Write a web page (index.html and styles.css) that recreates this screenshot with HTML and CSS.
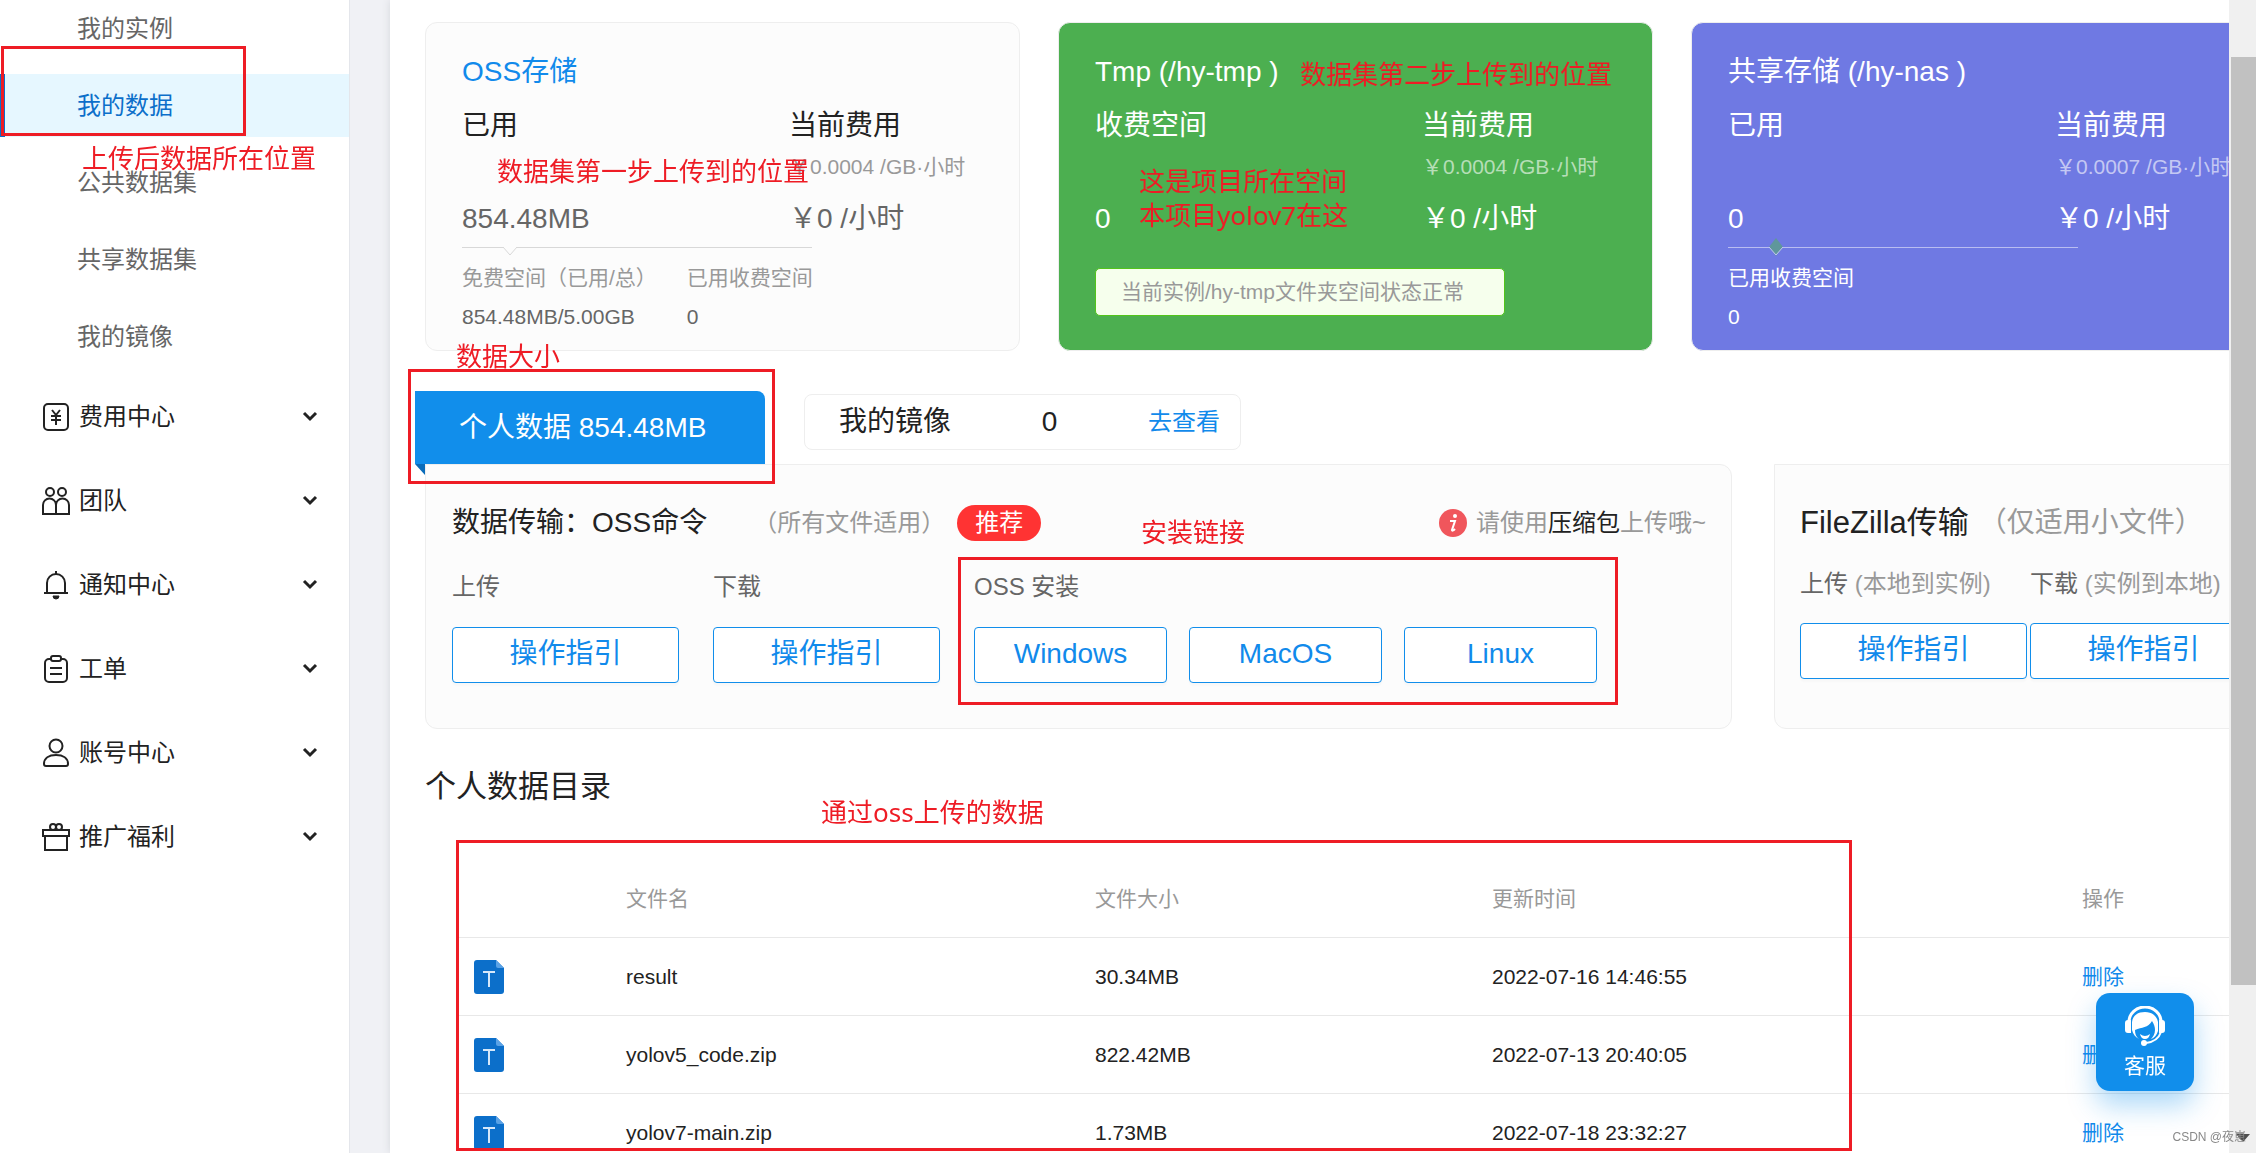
FILE: index.html
```html
<!DOCTYPE html>
<html lang="zh-CN">
<head>
<meta charset="utf-8">
<title>我的数据</title>
<link rel="stylesheet" href="styles.css">
</head>
<body>
<svg class="defs" aria-hidden="true">
  <symbol id="chevron" viewBox="0 0 16 12"><path d="M2 3l6 6 6-6" fill="none" stroke="currentColor" stroke-width="3"/></symbol>
  <symbol id="file" viewBox="0 0 30 34">
    <path d="M3 0h19l8 8v23a3 3 0 0 1-3 3H3a3 3 0 0 1-3-3V3a3 3 0 0 1 3-3z" fill="#0c6fca"/>
    <path d="M22 0l8 8h-6a2 2 0 0 1-2-2z" fill="#5aa2e6"/>
    <path d="M9 12h12M15 12v15" stroke="#d6e8fa" stroke-width="2" fill="none"/>
  </symbol>
</svg>
<div class="app">
  <nav class="sidebar">
    <ul class="submenu">
      <li><a class="subitem" href="#">我的实例</a></li>
      <li><a class="subitem subitem--active" href="#">我的数据</a></li>
      <li><a class="subitem" href="#">公共数据集</a></li>
      <li><a class="subitem" href="#">共享数据集</a></li>
      <li><a class="subitem" href="#">我的镜像</a></li>
    </ul>
    <ul class="menu">
      <li><button class="item" type="button">
        <svg class="item-icon" viewBox="0 0 28 28"><rect x="2" y="1" width="24" height="26" rx="4"/><path d="M10 7l4 5 4-5M9 13h10M9 17h10M14 12v10"/></svg>
        <span>费用中心</span><svg class="chevron"><use href="#chevron"/></svg></button></li>
      <li><button class="item" type="button">
        <svg class="item-icon" viewBox="0 0 28 28"><circle cx="8" cy="5" r="4"/><circle cx="20" cy="5" r="4"/><path d="M1 27v-9a6.500 6.500 0 0 1 13 0v9zM14 27v-9a6.500 6.500 0 0 1 13 0v9z"/></svg>
        <span>团队</span><svg class="chevron"><use href="#chevron"/></svg></button></li>
      <li><button class="item" type="button">
        <svg class="item-icon" viewBox="0 0 28 28"><path d="M14 0v3M2 22h24M5 22V12a9 9 0 0 1 18 0v10"/><path d="M11 25h6a3 3 0 0 1-6 0z" fill="currentColor" stroke-width="1"/></svg>
        <span>通知中心</span><svg class="chevron"><use href="#chevron"/></svg></button></li>
      <li><button class="item" type="button">
        <svg class="item-icon" viewBox="0 0 28 28"><path d="M9 4H7a4 4 0 0 0-4 4v15a4 4 0 0 0 4 4h14a4 4 0 0 0 4-4V8a4 4 0 0 0-4-4h-2"/><rect x="9" y="1" width="10" height="5" rx="2"/><path d="M8 13h12M8 19h12"/></svg>
        <span>工单</span><svg class="chevron"><use href="#chevron"/></svg></button></li>
      <li><button class="item" type="button">
        <svg class="item-icon" viewBox="0 0 28 28"><circle cx="14" cy="7" r="6.500"/><path d="M2 25c0-6 5-9 12-9s12 3 12 9c0 1-1 2-2 2H4c-1 0-2-1-2-2z"/></svg>
        <span>账号中心</span><svg class="chevron"><use href="#chevron"/></svg></button></li>
      <li><button class="item" type="button">
        <svg class="item-icon" viewBox="0 0 28 28"><path d="M1 7h26v6H1zM3 13v14h22V13"/><circle cx="11" cy="4" r="3"/><circle cx="17" cy="4" r="3"/></svg>
        <span>推广福利</span><svg class="chevron"><use href="#chevron"/></svg></button></li>
    </ul>
  </nav>

  <main class="main">
    <section class="cards">
      <article class="card">
        <h2 class="card-title card-title--link">OSS存储</h2>
        <div class="card-grid">
          <div>已用</div><div>当前费用</div>
          <div></div><div class="rate">&#xFFE5;0.0004 /GB·小时</div>
          <div class="amount">854.48MB</div><div class="amount">&#xFFE5;0 /小时</div>
        </div>
        <div class="details">
          <svg class="notch" viewBox="0 0 14 9"><path d="M0 0l7 8 7-8z" fill="#fcfcfc"/><path d="M0 0l7 8 7-8" fill="none" stroke="#d8d8d8"/></svg>
          <dl><dt>免费空间&#xFF08;已用/总&#xFF09;</dt><dd>854.48MB/5.00GB</dd></dl>
          <dl><dt>已用收费空间</dt><dd>0</dd></dl>
        </div>
      </article>
      <article class="card card--green">
        <h2 class="card-title">Tmp (/hy-tmp )</h2>
        <div class="card-grid">
          <div>收费空间</div><div>当前费用</div>
          <div></div><div class="rate">&#xFFE5;0.0004 /GB·小时</div>
          <div class="amount">0</div><div class="amount">&#xFFE5;0 /小时</div>
        </div>
        <p class="alert">当前实例/hy-tmp文件夹空间状态正常</p>
      </article>
      <article class="card card--violet">
        <h2 class="card-title">共享存储 (/hy-nas )</h2>
        <div class="card-grid">
          <div>已用</div><div>当前费用</div>
          <div></div><div class="rate">&#xFFE5;0.0007 /GB·小时</div>
          <div class="amount">0</div><div class="amount">&#xFFE5;0 /小时</div>
        </div>
        <div class="details">
          <svg class="notch notch--diamond" viewBox="0 0 14 18"><path d="M7 0l7 9-7 9-7-9z" fill="#5f979b"/><path d="M0 9l7 8 7-8" fill="none" stroke="#c3c7f3"/></svg>
          <dl><dt>已用收费空间</dt><dd>0</dd></dl>
        </div>
      </article>
    </section>

    <div class="tabs">
      <button class="tab" type="button">个人数据 854.48MB</button>
      <div class="mirror"><span>我的镜像</span><span>0</span><a href="#">去查看</a></div>
    </div>

    <section class="panels">
      <article class="panel">
        <header class="panel-head">
          <h3>数据传输&#xFF1A;OSS命令</h3>
          <span class="hint">&#xFF08;所有文件适用&#xFF09;</span>
          <span class="badge">推荐</span>
          <span class="notice"><svg viewBox="0 0 28 28"><circle cx="14" cy="14" r="14" fill="#f0565c"/><circle cx="16" cy="7" r="2" fill="#fff"/><path d="M11 12h5l-3 9c0 1 1 1 3-1" fill="none" stroke="#fff" stroke-width="2"/></svg><span>请使用<b>压缩包</b>上传哦~</span></span>
        </header>
        <div class="actions">
          <div><p>上传</p><button class="btn btn--guide" type="button">操作指引</button></div>
          <div><p>下载</p><button class="btn btn--guide" type="button">操作指引</button></div>
          <div><p>OSS 安装</p><div class="installs"><button class="btn" type="button">Windows</button><button class="btn" type="button">MacOS</button><button class="btn" type="button">Linux</button></div></div>
        </div>
      </article>
      <article class="panel panel--filezilla">
        <header class="panel-head">
          <h3>FileZilla传输</h3>
          <span class="hint">&#xFF08;仅适用小文件&#xFF09;</span>
        </header>
        <div class="actions">
          <div><p>上传 <span>(本地到实例)</span></p><button class="btn btn--guide" type="button">操作指引</button></div>
          <div><p>下载 <span>(实例到本地)</span></p><button class="btn btn--guide" type="button">操作指引</button></div>
        </div>
      </article>
    </section>

    <h2 class="section-title">个人数据目录</h2>
    <table class="files">
      <colgroup><col class="col-icon"><col class="col-name"><col class="col-size"><col class="col-time"><col class="col-op"></colgroup>
      <thead><tr><th></th><th>文件名</th><th>文件大小</th><th>更新时间</th><th>操作</th></tr></thead>
      <tbody>
        <tr><td><svg class="file-icon"><use href="#file"/></svg></td><td>result</td><td>30.34MB</td><td>2022-07-16 14:46:55</td><td><a href="#">删除</a></td></tr>
        <tr><td><svg class="file-icon"><use href="#file"/></svg></td><td>yolov5_code.zip</td><td>822.42MB</td><td>2022-07-13 20:40:05</td><td><a href="#">删除</a></td></tr>
        <tr><td><svg class="file-icon"><use href="#file"/></svg></td><td>yolov7-main.zip</td><td>1.73MB</td><td>2022-07-18 23:32:27</td><td><a href="#">删除</a></td></tr>
      </tbody>
    </table>
  </main>

  <div class="scrollbar"><div class="thumb"></div><svg class="scroll-arrow" viewBox="0 0 14 8"><path d="M0 0h14l-7 8z" fill="#505050"/></svg></div>
</div>

<button class="service" type="button">
  <svg viewBox="0 0 40 40">
    <path d="M4 16a16 15 0 0 1 32 0" fill="none" stroke="#fff" stroke-width="3"/>
    <path d="M3 14h3v13H3a3 3 0 0 1-3-3v-7a3 3 0 0 1 3-3zM34 14h3a3 3 0 0 1 3 3v7a3 3 0 0 1-3 3h-3z" fill="#fff"/>
    <path d="M7 16C8 9 13 6 20 6s12 4 13 10v9c-1 4-4 7-7 8 2-2 4-5 4-9 0-3-1-6-3-9-4 7-10 6-17 9 0 4 1 7 4 9-4-2-6-5-7-9z" fill="#fff"/>
    <path d="M15 28q5 4 10 0-1 5-5 5t-5-5z" fill="#fff"/>
    <path d="M36 26c-2 6-7 10-15 11" fill="none" stroke="#fff" stroke-width="2"/>
    <circle cx="19" cy="37" r="3" fill="#fff"/>
  </svg>
  <span>客服</span>
</button>

<div class="notes">
  <div class="box box--menu"></div>
  <div class="box box--tab"></div>
  <div class="box box--install"></div>
  <div class="box box--table"></div>
  <p class="note note--menu">上传后数据所在位置</p>
  <p class="note note--oss">数据集第一步上传到的位置</p>
  <p class="note note--tmp">数据集第二步上传到的位置</p>
  <p class="note note--space">这是项目所在空间<br>本项目yolov7在这</p>
  <p class="note note--size">数据大小</p>
  <p class="note note--install">安装链接</p>
  <p class="note note--table">通过oss上传的数据</p>
  <p class="watermark">CSDN @夜崽</p>
</div>
</body>
</html>
```
FILE: styles.css
```css
* { box-sizing: border-box; margin: 0; padding: 0; }
body {
  font: 21px/30px "Liberation Sans", "Noto Sans CJK SC", sans-serif;
  color: #222;
  background: #fff;
  overflow: hidden;
}
ul { list-style: none; }
a { color: #118aeb; text-decoration: none; }
button { font: inherit; color: inherit; background: none; border: 0; cursor: pointer; }
h2, h3, b, th { font-weight: 400; }
.defs { display: none; }

.app { display: flex; height: 100vh; background: #f0f1f5; }

/* Sidebar, scrolled slightly past its first entry */
.sidebar {
  flex: 0 0 350px;
  display: flex;
  flex-direction: column;
  gap: 14px;
  margin-top: -3px;
  font-size: 24px;
  background: #fff;
  border-right: 1px solid #e4e6eb;
}
.submenu, .menu { display: flex; flex-direction: column; gap: 14px; }
.subitem {
  display: flex;
  align-items: center;
  height: 63px;
  padding-left: 77px;
  color: #666;
}
.subitem--active {
  padding-left: 72px;
  color: #0c6fca;
  background: #e6f7ff;
  border-left: 5px solid #0c6fca;
}
.item {
  display: flex;
  align-items: center;
  gap: 9px;
  width: 100%;
  height: 70px;
  padding: 0 31px 0 42px;
}
.item-icon { width: 28px; height: 28px; fill: none; stroke: #222; stroke-width: 2; overflow: visible; }
.chevron { width: 16px; height: 12px; margin: 0 0 3px auto; }

/* Content */
.main {
  flex: 1 1 0;
  min-width: 0;
  margin-left: 40px;
  padding: 22px 0 0 35px;
  background: #fff;
  box-shadow: 0 0 8px #d4d7dc;
  overflow: hidden;
}
.cards {
  display: grid;
  grid-template-columns: repeat(3, minmax(595px, 1fr));
  gap: 38px;
}
.card {
  padding: 29px 36px 18px;
  background: #fcfcfc;
  border: 1px solid #eee;
  border-radius: 12px;
}
.card-title { font-size: 28px; line-height: 40px; }
.card-title--link { color: #118aeb; }
.card-grid {
  display: grid;
  grid-template-columns: 327px 1fr;
  grid-template-rows: 40px 30px 40px;
  row-gap: 6px;
  margin-top: 14px;
  font-size: 28px;
  line-height: 40px;
  white-space: nowrap;
}
.card-grid .rate { font-size: 21px; line-height: 30px; color: #999; }
.card-grid .amount { color: #666; margin-top: 11px; }
.details {
  position: relative;
  display: flex;
  gap: 30px;
  width: 350px;
  margin-top: 19px;
  padding-top: 15px;
  border-top: 1px solid #d8d8d8;
  white-space: nowrap;
}
.details dt { color: #999; }
.details dd { margin-top: 9px; color: #666; }
.notch { position: absolute; left: 41px; top: -1px; width: 14px; height: 9px; }
.notch--diamond { top: -10px; height: 18px; }
.card--green { background: #4caf50; color: #fff; }
.card--violet { background: #6f79e3; color: #fff; }
.card--green .amount, .card--violet .amount,
.card--violet dt, .card--violet dd { color: #fff; }
.card--green .rate, .card--violet .rate { color: rgba(255, 255, 255, 0.6); }
.card--violet .details { border-color: #b9bdf1; }
.alert {
  width: fit-content;
  margin-top: 40px;
  padding: 8px 40px 8px 25px;
  color: #999;
  background: #f6ffed;
  border: 1px solid #52c41a;
  border-radius: 5px;
}

.tabs { display: flex; gap: 39px; margin: 40px 0 0 -10px; font-size: 28px; }
.tab {
  position: relative;
  width: 350px;
  height: 73px;
  padding-left: 44px;
  color: #fff;
  text-align: left;
  background: #118eeb;
  border-radius: 0 8px 0 0;
}
.tab::after {
  content: "";
  position: absolute;
  left: 0;
  top: 100%;
  border-top: 11px solid #0a6cba;
  border-left: 10px solid transparent;
}
.mirror {
  display: flex;
  align-items: center;
  justify-content: space-between;
  width: 437px;
  height: 56px;
  margin-top: 3px;
  padding: 0 20px 0 34px;
  border: 1px solid #eee;
  border-radius: 8px;
}
.mirror a { font-size: 24px; }

.panels {
  display: grid;
  grid-template-columns: minmax(1307px, 5fr) minmax(513px, 2fr);
  gap: 42px;
}
.panel {
  padding: 40px 25px 45px 26px;
  background: #fcfcfc;
  border: 1px solid #eee;
  border-radius: 0 12px 12px 12px;
  white-space: nowrap;
}
.panel-head { display: flex; align-items: center; height: 36px; font-size: 24px; }
.panel-head h3 { font-size: 28px; }
.hint { margin-left: 46px; color: #999; }
.badge {
  margin-left: 12px;
  padding: 0 18px;
  line-height: 36px;
  color: #fff;
  background: #f33;
  border-radius: 18px;
}
.notice { display: flex; align-items: center; gap: 9px; margin-left: auto; color: #999; }
.notice svg { width: 28px; height: 28px; }
.notice b { color: #222; }
.actions { display: flex; gap: 34px; margin-top: 29px; font-size: 24px; }
.actions p { margin-bottom: 23px; line-height: 34px; color: #666; }
.actions p span { color: #999; }
.btn {
  width: 193px;
  height: 56px;
  padding-bottom: 2px;
  font-size: 28px;
  color: #118aeb;
  background: #fff;
  border: 1px solid #118eeb;
  border-radius: 4px;
  box-shadow: 0 3px 2px rgba(0, 0, 0, 0.02);
}
.btn--guide { width: 227px; }
.installs { display: flex; gap: 22px; }
.panel--filezilla { padding-left: 25px; }
.panel--filezilla h3 { font-size: 31px; }
.panel--filezilla .hint { margin-left: 10px; font-size: 28px; }
.panel--filezilla .actions { gap: 3px; margin-top: 26px; }
.panel--filezilla .actions p { margin-bottom: 22px; }

.section-title { margin-top: 36px; font-size: 31px; line-height: 44px; }
.files {
  min-width: 1830px;
  margin: 51px 0 0 32px;
  table-layout: fixed;
  border-spacing: 0;
}
.files th, .files td { height: 78px; text-align: left; border-bottom: 1px solid #e8e8e8; }
.files th { color: #999; }
.files td:first-child { padding-left: 17px; }
.col-icon { width: 169px; }
.col-name { width: 469px; }
.col-size { width: 397px; }
.col-time { width: 590px; }
.col-op { width: 205px; }
.file-icon { display: block; width: 30px; height: 34px; }

.scrollbar {
  position: relative;
  flex: 0 0 27px;
  padding: 57px 0 168px 2px;
  background: #f0f0f0;
}
.thumb { height: 100%; background: #c1c1c1; }
.scroll-arrow { position: absolute; left: 7px; bottom: 11px; width: 14px; height: 8px; }

.service {
  position: fixed;
  right: 62px;
  bottom: 62px;
  display: flex;
  flex-direction: column;
  align-items: center;
  gap: 5px;
  width: 98px;
  height: 98px;
  padding-top: 13px;
  color: #fff;
  background: #118eeb;
  border-radius: 14px;
  box-shadow: 0 14px 28px rgba(17, 142, 235, 0.35);
}
.service svg { width: 40px; height: 40px; }

/* Hand-placed annotations on top of the page */
.notes { position: absolute; inset: 0; overflow: hidden; pointer-events: none; }
.box { position: absolute; border: 3px solid #ee1c25; }
.box--menu { left: 1px; top: 46px; width: 245px; height: 90px; }
.box--tab { left: 408px; top: 369px; width: 367px; height: 115px; }
.box--install { left: 958px; top: 557px; width: 660px; height: 148px; }
.box--table { left: 456px; top: 840px; width: 1396px; height: 311px; }
.note {
  position: absolute;
  font: 26px/34px "Noto Sans", "Noto Sans CJK SC", sans-serif;
  color: #ee1c25;
  white-space: nowrap;
}
.note--menu { left: 82px; top: 141px; }
.note--oss { left: 497px; top: 154px; }
.note--tmp { left: 1300px; top: 57px; }
.note--space { left: 1139px; top: 164px; }
.note--size { left: 456px; top: 339px; }
.note--install { left: 1141px; top: 515px; }
.note--table { left: 821px; top: 795px; }
.watermark { position: absolute; right: 10px; bottom: 6px; font-size: 12px; line-height: 20px; color: #888; }
```
